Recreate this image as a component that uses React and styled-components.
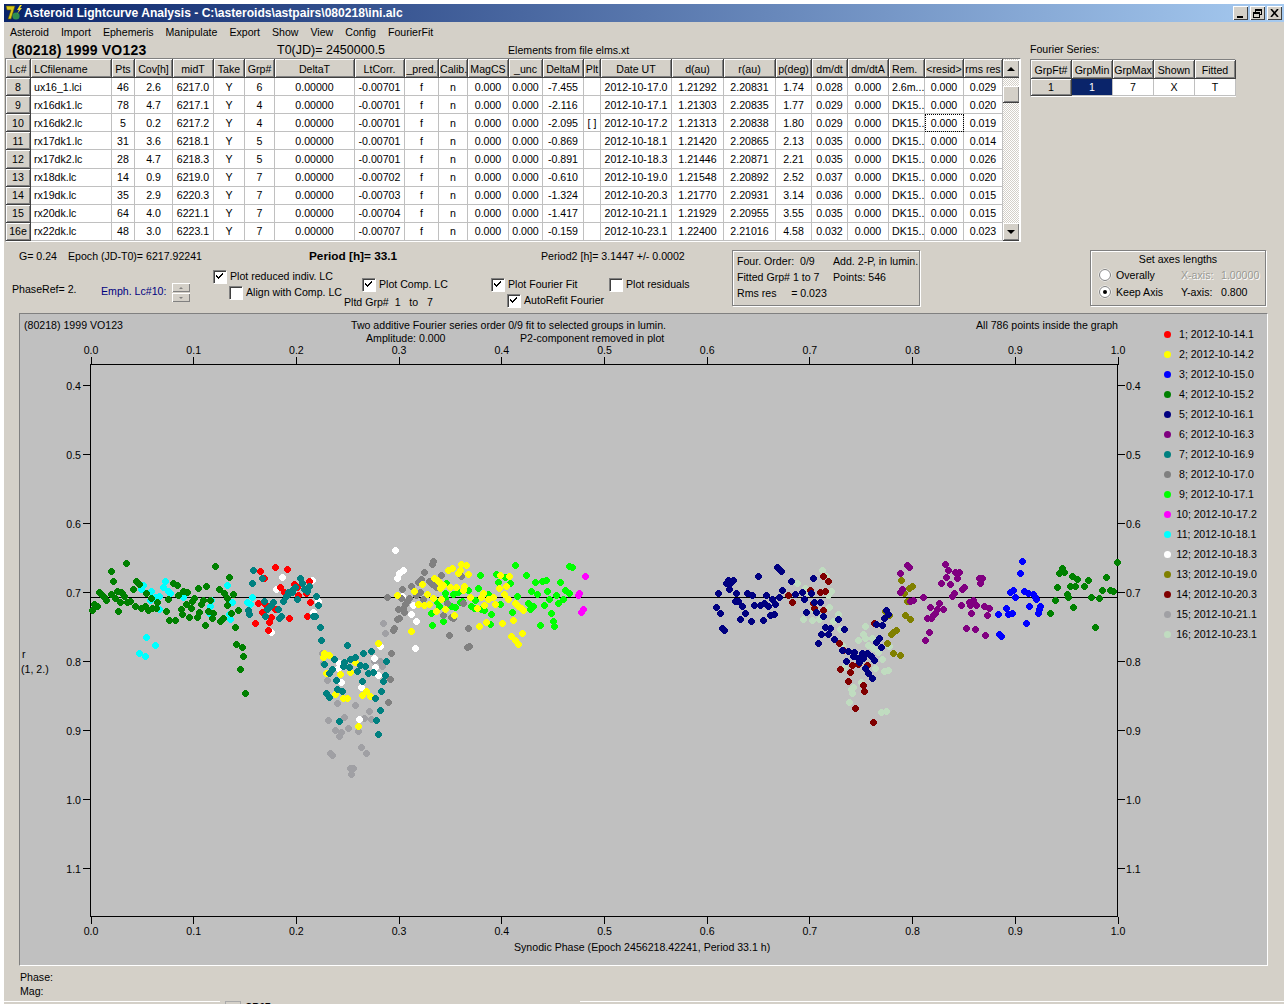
import React from 'react';
import styled, { createGlobalStyle } from 'styled-components';

const FACE = '#d4d0c8';
const SHADOW = '#808080';

const GlobalStyle = createGlobalStyle`
  html, body {
    margin: 0;
    padding: 0;
    background: #fff;
    overflow: hidden;
  }
  body {
    font-family: "Liberation Sans", Arial, sans-serif;
    font-size: 10.6px;
    color: #000;
  }
`;

const COLUMNS = [25, 81, 23, 38, 41, 31, 30, 80, 50, 34, 29, 41, 34, 41, 17, 71, 52, 52, 36, 36, 41, 36, 39, 39];
const HEADERS = ['Lc#', 'LCfilename', 'Pts', 'Cov[h]', 'midT', 'Take', 'Grp#', 'DeltaT', 'LtCorr.', '_pred.', 'Calib.', 'MagCS', '_unc', 'DeltaM', 'Plt', 'Date UT', 'd(au)', 'r(au)', 'p(deg)', 'dm/dt', 'dm/dtA', 'Rem.', '<resid>', 'rms res'];
const ROWS = [
  ['8', 'ux16_1.lci', '46', '2.6', '6217.0', 'Y', '6', '0.00000', '-0.00701', 'f', 'n', '0.000', '0.000', '-7.455', '', '2012-10-17.0', '1.21292', '2.20831', '1.74', '0.028', '0.000', '2.6m...', '0.000', '0.029'],
  ['9', 'rx16dk1.lc', '78', '4.7', '6217.1', 'Y', '4', '0.00000', '-0.00701', 'f', 'n', '0.000', '0.000', '-2.116', '', '2012-10-17.1', '1.21303', '2.20835', '1.77', '0.029', '0.000', 'DK15..', '0.000', '0.020'],
  ['10', 'rx16dk2.lc', '5', '0.2', '6217.2', 'Y', '4', '0.00000', '-0.00701', 'f', 'n', '0.000', '0.000', '-2.095', '[ ]', '2012-10-17.2', '1.21313', '2.20838', '1.80', '0.029', '0.000', 'DK15..', '0.000', '0.019'],
  ['11', 'rx17dk1.lc', '31', '3.6', '6218.1', 'Y', '5', '0.00000', '-0.00701', 'f', 'n', '0.000', '0.000', '-0.869', '', '2012-10-18.1', '1.21420', '2.20865', '2.13', '0.035', '0.000', 'DK15..', '0.000', '0.014'],
  ['12', 'rx17dk2.lc', '28', '4.7', '6218.3', 'Y', '5', '0.00000', '-0.00701', 'f', 'n', '0.000', '0.000', '-0.891', '', '2012-10-18.3', '1.21446', '2.20871', '2.21', '0.035', '0.000', 'DK15..', '0.000', '0.026'],
  ['13', 'rx18dk.lc', '14', '0.9', '6219.0', 'Y', '7', '0.00000', '-0.00702', 'f', 'n', '0.000', '0.000', '-0.610', '', '2012-10-19.0', '1.21548', '2.20892', '2.52', '0.037', '0.000', 'DK15..', '0.000', '0.020'],
  ['14', 'rx19dk.lc', '35', '2.9', '6220.3', 'Y', '7', '0.00000', '-0.00703', 'f', 'n', '0.000', '0.000', '-1.324', '', '2012-10-20.3', '1.21770', '2.20931', '3.14', '0.036', '0.000', 'DK15..', '0.000', '0.015'],
  ['15', 'rx20dk.lc', '64', '4.0', '6221.1', 'Y', '7', '0.00000', '-0.00704', 'f', 'n', '0.000', '0.000', '-1.417', '', '2012-10-21.1', '1.21929', '2.20955', '3.55', '0.035', '0.000', 'DK15..', '0.000', '0.015'],
  ['16e', 'rx22dk.lc', '48', '3.0', '6223.1', 'Y', '7', '0.00000', '-0.00707', 'f', 'n', '0.000', '0.000', '-0.159', '', '2012-10-23.1', '1.22400', '2.21016', '4.58', '0.032', '0.000', 'DK15..', '0.000', '0.023'],
];
const LEFT_COLS = [1, 21];
const MENU = ['Asteroid', 'Import', 'Ephemeris', 'Manipulate', 'Export', 'Show', 'View', 'Config', 'FourierFit'];
const FOURIER_HEAD = ['GrpFt#', 'GrpMin', 'GrpMax', 'Shown', 'Fitted'];

const LEGEND = [
  ['1; 2012-10-14.1', '#ff0000'], ['2; 2012-10-14.2', '#ffff00'], ['3; 2012-10-15.0', '#0000ff'], ['4; 2012-10-15.2', '#008000'],
  ['5; 2012-10-16.1', '#000080'], ['6; 2012-10-16.3', '#800080'], ['7; 2012-10-16.9', '#008080'], ['8; 2012-10-17.0', '#808080'],
  ['9; 2012-10-17.1', '#00ff00'], ['10; 2012-10-17.2', '#ff00ff'], ['11; 2012-10-18.1', '#00ffff'], ['12; 2012-10-18.3', '#ffffff'],
  ['13; 2012-10-19.0', '#808000'], ['14; 2012-10-20.3', '#800000'], ['15; 2012-10-21.1', '#a0a0a4'], ['16; 2012-10-23.1', '#c0dcc0'],
];

// dots were read off 3x crops, so each list keeps the crop's origin: [colour, originX, [x, y, x, y, ...]]
const LEFT = 80;
const MID = 380;
const RIGHT = 700;
const SERIES = [
  ['#c0dcc0', RIGHT, [367,91,379,109,292,130,316,145,322,157,394,154,385,166,388,202,415,223,310,238,337,241,358,238,400,244,421,268,496,259,490,283,496,295,475,301,517,295,505,316,568,319,427,316,535,337,547,358,526,385,553,394,565,391,433,382,484,427,460,442,454,448,457,460,448,487,544,517,559,514,340,208,520,325]],
  ['#a0a0a4', LEFT, [742,421,772,490,826,496,793,532,745,541,868,514,853,535,874,538,766,571,784,577,778,589,805,565,835,574,844,622,859,640,751,640,757,646,811,685,820,685,814,703,883,364,907,379,901,364,727,340,730,370,910,250,916,280,967,148]],
  ['#800000', RIGHT, [385,122,370,108,277,187,265,164,361,157,376,154,343,205,370,211,418,310,490,435,457,376,475,373,502,376,451,397,421,388,445,424,493,454,466,505,520,547,523,250,330,150,338,190,430,330]],
  ['#808000', RIGHT, [604,121,637,139,628,145,613,160,622,184,616,226,631,238,589,271,580,277,574,283,562,310,580,340,601,346,556,214,568,226]],
  ['#ffffff', LEFT, [607,112,697,121,589,148,700,217,715,184,777,370,775,385,574,277,883,355,901,319,886,380,895,406,784,427,844,442,837,538,946,31,970,91,958,100,952,115,965,167]],
  ['#ffffff', MID, [100,196,94,223,109,244,106,325]],
  ['#00ffff', LEFT, [190,136,184,148,214,154,256,124,250,142,265,154,271,160,238,169,226,172,211,181,310,172,394,181,391,199,388,220,238,208,442,136,457,187,451,238,448,223,517,172,502,187,511,193,199,292,226,316,178,340,196,349]],
  ['#ff00ff', MID, [616,109,598,160,595,166,610,208,604,217]],
  ['#00ff00', MID, [406,76,301,106,349,103,439,106,376,112,355,127,391,130,466,127,487,124,499,121,541,127,295,145,454,154,472,163,502,154,529,166,556,151,568,160,550,178,508,178,535,190,493,196,445,190,460,199,451,208,397,217,514,220,520,244,523,259,481,256,568,79,577,82,199,130,220,163,235,157,265,150,196,160,172,187,178,199,214,199,226,202,154,220,190,244,157,256,247,184,241,187,274,199,283,205,304,208,313,211,334,223,330,253,361,193,325,163,412,169,286,181,196,175]],
  ['#808080', MID, [160,64,157,73,133,97,184,106,124,118,115,127,94,139,148,124,157,133,169,142,121,157,88,175,82,184,64,175,76,193,70,205,55,208,73,217,58,235,50,238,43,265,40,271,200,190,190,226,214,232,220,235,265,265,208,286,262,322,268,319,34,340,22,172,244,109,109,166,130,178,250,190,67,148]],
  ['#808080', LEFT, [934,340,931,418,925,487]],
  ['#ff0000', LEFT, [541,94,586,82,622,88,553,115,601,142,643,133,688,124,652,142,679,160,613,157,533,190,556,193,584,208,545,217,574,232,568,247,526,250,565,271,628,235,682,229,691,187,655,165]],
  ['#ffff00', LEFT, [733,340,748,346,730,352,893,310,826,367,739,400,781,403,811,397,766,463,790,475,802,475,859,454,847,466,871,469,835,559]],
  ['#ffff00', MID, [244,73,259,76,217,85,205,91,241,91,235,100,265,103,163,115,172,121,178,127,190,136,181,145,127,133,103,154,142,163,52,166,160,175,184,178,115,193,133,196,148,193,169,214,196,208,223,226,211,142,229,142,253,139,250,151,271,172,310,160,304,172,325,178,340,172,292,205,313,196,346,193,361,106,388,109,379,139,358,145,373,163,385,178,406,190,415,199,424,205,430,211,400,241,367,250,319,247,298,259,427,280,394,289,406,301,415,313,94,274]],
  ['#0000ff', RIGHT, [967,64,960,100,940,151,931,157,946,172,973,154,985,160,1000,163,1006,172,1009,178,988,199,1021,199,1018,208,1015,220,919,205,937,220,925,223,895,223,979,250,898,283,904,289]],
  ['#008000', LEFT, [139,70,94,92,100,124,169,124,176,133,160,148,112,152,122,155,58,157,65,164,72,170,92,163,105,175,127,160,133,168,79,181,121,186,142,186,150,182,115,214,164,199,183,205,194,198,205,211,215,204,228,204,232,187,199,160,212,173,263,178,259,214,267,241,286,241,279,129,290,136,295,165,310,154,322,155,355,145,379,139,406,79,448,112,418,148,432,160,460,163,442,175,440,196,342,175,336,183,317,193,332,205,302,208,307,222,328,232,350,232,358,217,364,193,370,181,391,181,384,214,400,220,397,235,421,244,428,235,376,256,454,220,475,211,466,262,469,313,487,322,490,349,481,388,496,460,37,211,43,193,52,199]],
  ['#008000', RIGHT, [1252,67,1085,85,1078,100,1092,97,1115,109,1132,118,1165,121,1219,112,1072,142,1111,139,1126,139,1153,139,1100,163,1105,170,1064,181,1120,202,1051,220,1174,172,1198,175,1207,151,1229,151,1240,154,1186,262]],
  ['#000080', RIGHT, [232,82,238,88,244,94,175,109,274,124,340,115,100,121,85,121,79,130,91,130,88,148,55,160,109,160,142,160,157,166,199,166,247,151,238,172,217,178,226,193,106,184,115,184,127,199,163,196,181,196,193,190,205,199,49,202,61,220,136,220,121,238,154,244,190,241,211,226,223,223,67,265,73,271,286,163,307,157,334,160,313,178,343,187,361,187,319,217,349,217,370,229,415,238,376,262,391,265,433,268,364,283,385,283,403,298,355,310,427,331,445,334,463,337,439,364,460,349,475,355,490,355,502,340,514,349,523,361,478,365,485,340,496,385,505,400,517,415,538,295,529,307,544,322,529,253,547,256,553,235,559,211,565,223]],
  ['#800080', RIGHT, [622,76,628,82,601,100,607,148,601,157,640,181,631,184,670,172,691,202,736,73,745,91,766,97,778,97,739,112,772,115,724,130,751,133,793,142,787,148,763,160,757,169,838,115,847,115,841,130,784,196,808,187,820,181,829,196,811,196,853,199,868,205,862,226,814,220,718,190,730,208,712,208,706,220,700,226,694,235,682,235,688,277,676,301,799,265,826,268,856,286]],
  ['#008080', LEFT, [520,91,547,115,517,130,661,115,667,130,640,148,625,157,619,169,688,139,682,154,652,178,580,187,574,196,562,208,556,229,595,208,604,229,598,235,505,211,508,223,551,184,709,169,715,196,700,229,706,229,721,262,724,301,802,316,874,334,850,340,826,352,811,358,793,367,790,379,763,358,733,373,757,388,748,400,769,421,808,382,832,394,841,376,856,379,865,400,880,397,919,364,916,406,910,424,847,424,904,454,886,475,901,511,889,541,895,583,778,544,748,472,739,460,772,448,787,454,628,160,637,157,646,142,673,148,610,184,565,205]],
];

const PLOT = { left: 90.5, right: 1117.5, top: 364.5, bottom: 916.5 };
const PHASES = ['0.0', '0.1', '0.2', '0.3', '0.4', '0.5', '0.6', '0.7', '0.8', '0.9', '1.0'];
const MAGS = ['0.4', '0.5', '0.6', '0.7', '0.8', '0.9', '1.0', '1.1'];

const Page = styled.div`
  box-sizing: border-box;
  width: 1288px;
  height: 1004px;
  padding: 4px 4px 0;
  overflow: hidden;
`;

const Window = styled.div`
  display: flex;
  flex-direction: column;
  height: 1000px;
  background: ${FACE};
`;

const TitleBar = styled.div`
  display: flex;
  align-items: center;
  flex: none;
  height: 18px;
  padding: 0 2px 0 1px;
  background: linear-gradient(90deg, #0a246a, #a6caf0);
  color: #fff;
  font-size: 12.1px;
  font-weight: bold;
`;

const TitleText = styled.span`
  flex: 1;
  margin-left: 1px;
`;

const CaptionButton = styled.button`
  display: flex;
  align-items: center;
  justify-content: center;
  width: 15px;
  height: 14px;
  margin-left: ${(p) => p.$gap}px;
  padding: 0;
  border: 0;
  background: ${FACE};
  box-shadow: inset 1px 1px #fff, inset -1px -1px #404040;
`;

const MenuBar = styled.div`
  display: flex;
  flex: none;
  align-items: center;
  gap: 12px;
  height: 19px;
  padding-left: 6px;
`;

const HeadingRow = styled.div`
  display: flex;
  flex: none;
  align-items: center;
  box-sizing: border-box;
  height: 17px;
  padding-top: 1px;
`;

const HeadingText = styled.span`
  flex: none;
  width: ${(p) => p.$width}px;
  padding-left: ${(p) => p.$pad || 0}px;
  box-sizing: border-box;
  font-size: ${(p) => p.$size || 10.6}px;
  font-weight: ${(p) => (p.$bold ? 'bold' : 'normal')};
  letter-spacing: ${(p) => (p.$bold ? '0.2px' : '0')};
`;

const TableRow = styled.div`
  display: flex;
  flex: none;
  height: 183px;
  padding-left: 1px;
`;

const GridFrame = styled.div`
  display: flex;
  flex: none;
  width: 1014px;
  height: 182px;
  border-top: 1px solid ${SHADOW};
  border-left: 1px solid ${SHADOW};
  border-right: 1px solid #fff;
  border-bottom: 1px solid #fff;
  background: #fff;
`;

const Grid = styled.table`
  flex: none;
  width: ${(p) => p.$width}px;
  table-layout: fixed;
  border-collapse: separate;
  border-spacing: 0;
  font-size: 10.6px;
`;

const HeadCell = styled.th`
  box-sizing: border-box;
  height: ${(p) => p.$height}px;
  padding: ${(p) => (p.$head ? '1px' : '0')} 1px 0;
  overflow: hidden;
  background: ${FACE};
  border-right: 1px solid #404040;
  border-bottom: 1px solid #404040;
  box-shadow: inset 1px 1px #fff, inset -1px -1px ${SHADOW};
  font-weight: normal;
  white-space: nowrap;
  text-align: ${(p) => (p.$left ? 'left' : 'center')};
  padding-left: ${(p) => (p.$left ? '3px' : '1px')};
`;

const DataCell = styled.td`
  box-sizing: border-box;
  height: ${(p) => p.$height}px;
  padding: 0 1px;
  overflow: hidden;
  border-right: 1px solid #c0c0c0;
  border-bottom: 1px solid #c0c0c0;
  white-space: nowrap;
  text-align: ${(p) => (p.$left ? 'left' : 'center')};
  padding-left: ${(p) => (p.$left ? '3px' : '1px')};
  outline: ${(p) => (p.$focus ? '1px dotted #000' : 'none')};
  outline-offset: -1px;
  background: ${(p) => (p.$selected ? '#0a246a' : '#fff')};
  color: ${(p) => (p.$selected ? '#fff' : '#000')};
`;

const ScrollBar = styled.div`
  display: flex;
  flex: none;
  flex-direction: column;
  box-sizing: border-box;
  width: 16px;
  height: 181px;
  padding-top: 1px;
  background: repeating-conic-gradient(#fff 0 25%, ${FACE} 0 50%) 0 0 / 2px 2px;
`;

const ScrollButton = styled.div`
  display: flex;
  flex: none;
  align-items: center;
  justify-content: center;
  height: ${(p) => p.$height}px;
  margin-top: ${(p) => p.$top || 0}px;
  background: ${FACE};
  box-shadow: inset 1px 1px #fff, inset -1px -1px ${SHADOW}, 0 1px #404040;
`;

const ArrowGlyph = styled.i`
  width: 0;
  height: 0;
  border-left: 4px solid transparent;
  border-right: 4px solid transparent;
  border-${(p) => (p.$down ? 'top' : 'bottom')}: 4px solid #000;
`;

const FourierPanel = styled.div`
  display: flex;
  flex: none;
  flex-direction: column;
  margin: -17px 0 0 9px;
`;

const FourierLabel = styled.div`
  height: 18px;
  line-height: 16px;
`;

const FourierFrame = styled.div`
  box-sizing: border-box;
  width: 206px;
  height: 38px;
  border-top: 1px solid ${SHADOW};
  border-left: 1px solid ${SHADOW};
  border-right: 1px solid #fff;
  border-bottom: 1px solid #fff;
  background: ${FACE};
`;

const ControlsRow = styled.div`
  display: flex;
  flex: none;
  height: 72px;
`;

const LeftControls = styled.div`
  display: flex;
  flex: none;
  flex-direction: column;
  width: 728px;
`;

const InfoLine = styled.div`
  display: flex;
  flex: none;
  align-items: center;
  height: 24px;
  padding: 7px 0 0 15px;
  box-sizing: border-box;
  line-height: 13px;
`;

const InfoText = styled.span`
  flex: none;
  width: ${(p) => p.$width}px;
  font-size: ${(p) => (p.$bold ? '11.8px' : 'inherit')};
  font-weight: ${(p) => (p.$bold ? 'bold' : 'normal')};
`;

const OptionsRow = styled.div`
  display: flex;
  flex: 1;
  padding-left: 8px;
`;

const OptionColumn = styled.div`
  display: flex;
  flex: none;
  flex-direction: column;
  width: ${(p) => p.$width}px;
  padding-top: ${(p) => p.$top}px;
  box-sizing: border-box;
  color: ${(p) => p.$color || '#000'};
  line-height: 13px;
`;

const SpinBox = styled.div`
  display: flex;
  flex-direction: column;
  gap: 1px;
  width: 18px;
`;

const SpinButton = styled.div`
  display: flex;
  align-items: center;
  justify-content: center;
  height: 9px;
  background: ${FACE};
  box-shadow: inset 1px 1px #fff, inset -1px -1px ${SHADOW};
`;

const SmallArrow = styled.i`
  width: 0;
  height: 0;
  border-left: 2px solid transparent;
  border-right: 2px solid transparent;
  border-${(p) => (p.$down ? 'top' : 'bottom')}: 2px solid ${SHADOW};
`;

const CheckRow = styled.label`
  display: flex;
  align-items: center;
  height: 16px;
  margin-left: ${(p) => p.$indent || 0}px;
  white-space: nowrap;
`;

const CheckBox = styled.span`
  display: flex;
  flex: none;
  box-sizing: border-box;
  width: 13px;
  height: 13px;
  margin-right: 4px;
  background: #fff;
  border-top: 1px solid ${SHADOW};
  border-left: 1px solid ${SHADOW};
  box-shadow: inset 1px 1px #404040, 1px 1px 0 #fff;
`;

const PlainRow = styled.div`
  height: 16px;
  margin-top: 2px;
  line-height: 16px;
  white-space: pre;
`;

const GroupBox = styled.div`
  flex: none;
  box-sizing: border-box;
  width: ${(p) => p.$width}px;
  height: 56px;
  margin: 9px 0 0 ${(p) => p.$left}px;
  border: 1px solid ${SHADOW};
  box-shadow: 1px 1px 0 #fff, inset 1px 1px 0 #fff;
`;

const FourBody = styled.div`
  display: grid;
  grid-template-columns: 96px auto;
  grid-auto-rows: 16px;
  align-items: center;
  padding: 2px 0 0 4px;
  white-space: pre;
`;

const AxesTitle = styled.div`
  height: 13px;
  padding-top: 1px;
  line-height: 14px;
  text-align: center;
`;

const AxesGrid = styled.div`
  display: grid;
  grid-template-columns: 17px 65px 40px auto;
  grid-auto-rows: 17px;
  align-items: center;
  padding: 1px 0 0 8px;
`;

const Radio = styled.span`
  display: flex;
  align-items: center;
  justify-content: center;
  box-sizing: border-box;
  width: 12px;
  height: 12px;
  border-radius: 50%;
  background: #fff;
  border: 1px solid ${SHADOW};
  box-shadow: 0 0 0 0.5px #fff;
`;

const RadioDot = styled.i`
  width: 4px;
  height: 4px;
  border-radius: 50%;
  background: #000;
`;

const AxisValue = styled.span`
  color: ${(p) => (p.$off ? '#9a9a94' : '#000')};
  text-shadow: ${(p) => (p.$off ? '1px 1px 0 #fff' : 'none')};
`;

const PlotPanel = styled.div`
  display: flex;
  flex: none;
  box-sizing: border-box;
  width: 1249px;
  height: 653px;
  margin-left: 15px;
  background: #c0c0c0;
  border-top: 1px solid ${SHADOW};
  border-left: 1px solid ${SHADOW};
  border-right: 1px solid #fff;
  border-bottom: 1px solid #fff;
`;

const Chart = styled.svg`
  display: block;
  flex: none;
`;

const ChartText = styled.text`
  font-family: "Liberation Sans", Arial, sans-serif;
  font-size: 10.6px;
  fill: #000;
`;

const Legend = styled.ul`
  display: flex;
  flex: 1;
  flex-direction: column;
  margin: 0;
  padding: 10px 0 0 4px;
  list-style: none;
`;

const LegendItem = styled.li`
  display: flex;
  align-items: center;
  height: 20px;
`;

const LegendDot = styled.i`
  flex: none;
  width: 7px;
  height: 7px;
  border-radius: 50%;
  background: ${(p) => p.$color};
`;

const LegendLabel = styled.span`
  flex: 1;
  text-align: center;
  margin-left: 4px;
  margin-right: 9px;
`;

const StatusArea = styled.div`
  flex: none;
  height: 35px;
  padding: 4px 0 0 16px;
  box-sizing: border-box;
  line-height: 14px;
`;

const BottomEdge = styled.div`
  display: flex;
  flex: 1;
  overflow: hidden;
`;

const EdgeLine = styled.div`
  flex: ${(p) => (p.$width ? 'none' : '1')};
  width: ${(p) => p.$width}px;
  border-top: 1px solid #fff;
`;

const PeekBox = styled.div`
  flex: none;
  width: 14px;
  height: 8px;
  margin: 0 4px 0 5px;
  border: 1px solid #aaa;
`;

const PeekText = styled.div`
  flex: none;
  width: 335px;
  line-height: 13px;
  font-weight: bold;
  font-size: 10px;
`;

const AppIcon = () => (
  <svg width="18" height="16" viewBox="0 0 18 16">
    <rect width="18" height="16" fill="#0a246a" />
    <path d="M1 1h9l-4 13H3l3-9H2z" fill="#d8c818" stroke="#5a5000" strokeWidth="0.6" />
    <circle cx="11" cy="11" r="3.6" fill="#2f8f4f" />
    <path d="M15 0l-3 5h2l-2 4 5-6h-2l2-3z" fill="#f4e020" />
  </svg>
);

const MinGlyph = () => (
  <svg width="9" height="9" viewBox="0 0 9 9"><rect x="1" y="7" width="6" height="2" /></svg>
);

const RestoreGlyph = () => (
  <svg width="9" height="9" viewBox="0 0 9 9" fill="none" stroke="#000" shapeRendering="crispEdges">
    <path d="M2.5 2.5V.5h6v5h-2" />
    <path d="M2.5 1.5h6" />
    <rect x="0.5" y="3.5" width="6" height="5" fill={FACE} />
    <path d="M0.5 4.5h6" />
  </svg>
);

const CloseGlyph = () => (
  <svg width="9" height="8" viewBox="0 0 9 8" stroke="#000" strokeWidth="1.6">
    <path d="M1 0l7 8M8 0L1 8" />
  </svg>
);

const CheckMark = () => (
  <svg width="11" height="11" viewBox="0 0 11 11" fill="none" stroke="#000" strokeWidth="2" shapeRendering="crispEdges">
    <path d="M2 4.5l2.5 2.5L9 2.5" />
  </svg>
);

const Option = ({ checked, indent, children }) => (
  <CheckRow $indent={indent}>
    <CheckBox>{checked && <CheckMark />}</CheckBox>
    {children}
  </CheckRow>
);

const gridWidth = COLUMNS.reduce((sum, w) => sum + w, 0);

// the old GDI plot draws 7px blobs with stepped corners, not smooth circles
const blobPath = (flat, origin) => {
  let d = '';
  for (let i = 0; i < flat.length; i += 2) {
    const x = Math.round(origin + flat[i] / 3) - 1;
    const y = Math.round(540 + flat[i + 1] / 3) - 3;
    d += `M${x} ${y}h3v1h1v1h1v3h-1v1h-1v1h-3v-1h-1v-1h-1v-3h1v-1h1z`;
  }
  return d;
};

function LightcurveGrid() {
  return (
    <Grid $width={gridWidth}>
      <colgroup>
        {COLUMNS.map((w, i) => <col key={i} width={w} />)}
      </colgroup>
      <thead>
        <tr>
          {HEADERS.map((h, i) => <HeadCell key={h} $head $height={19} $left={LEFT_COLS.includes(i)}>{h}</HeadCell>)}
        </tr>
      </thead>
      <tbody>
        {ROWS.map((row, r) => (
          <tr key={row[0]}>
            {row.map((v, i) => (i === 0
              ? <HeadCell key={i} as="td" $height={18}>{v}</HeadCell>
              : <DataCell key={i} $height={18} $left={LEFT_COLS.includes(i)} $focus={r === 2 && i === 22}>{v}</DataCell>
            ))}
          </tr>
        ))}
      </tbody>
    </Grid>
  );
}

function FourierGrid() {
  return (
    <Grid $width={204}>
      <colgroup>
        {FOURIER_HEAD.map((h) => <col key={h} width={41} />)}
      </colgroup>
      <thead>
        <tr>{FOURIER_HEAD.map((h) => <HeadCell key={h} $head $height={19}>{h}</HeadCell>)}</tr>
      </thead>
      <tbody>
        <tr>
          <HeadCell as="td" $height={17}>1</HeadCell>
          <DataCell $height={17} $selected>1</DataCell>
          <DataCell $height={17}>7</DataCell>
          <DataCell $height={17}>X</DataCell>
          <DataCell $height={17}>T</DataCell>
        </tr>
      </tbody>
    </Grid>
  );
}

function PlotChart() {
  const width = 1140;
  const unit = (PLOT.right - PLOT.left) / 10;
  const magY = (i) => 385.5 + i * 69;
  return (
    <Chart width={width} height={651} viewBox={`20 314 ${width} 651`}>
      <ChartText x="24" y="329">(80218) 1999 VO123</ChartText>
      <ChartText x="351" y="329">Two additive Fourier series order 0/9 fit to selected groups in lumin.</ChartText>
      <ChartText x="366" y="342">Amplitude: 0.000</ChartText>
      <ChartText x="520" y="342">P2-component removed in plot</ChartText>
      <ChartText x="976" y="329">All 786 points inside the graph</ChartText>

      <g stroke="#000" shapeRendering="crispEdges" fill="none">
        <rect x={PLOT.left} y={PLOT.top} width={PLOT.right - PLOT.left} height={PLOT.bottom - PLOT.top} />
        <path d={`M${PLOT.left} 597.5H${PLOT.right}`} />
        {PHASES.map((_, i) => {
          const x = Math.round(PLOT.left + unit * i) + 0.5;
          return <path key={i} d={`M${x} 357V${PLOT.top}M${x} ${PLOT.bottom}V924`} />;
        })}
        {MAGS.map((_, i) => (
          <path key={i} d={`M83 ${magY(i)}H${PLOT.left}M${PLOT.right} ${magY(i)}H1125`} />
        ))}
      </g>

      {SERIES.map(([color, origin, flat], s) => (
        <path key={s} d={blobPath(flat, origin)} fill={color} shapeRendering="crispEdges" />
      ))}

      {PHASES.map((label, i) => {
        const x = PLOT.left + unit * i + 0.5;
        return (
          <React.Fragment key={label}>
            <ChartText x={x} y="354" textAnchor="middle">{label}</ChartText>
            <ChartText x={x} y="935" textAnchor="middle">{label}</ChartText>
          </React.Fragment>
        );
      })}
      {MAGS.map((label, i) => (
        <React.Fragment key={label}>
          <ChartText x="81" y={magY(i) + 4} textAnchor="end">{label}</ChartText>
          <ChartText x="1126" y={magY(i) + 4}>{label}</ChartText>
        </React.Fragment>
      ))}
      <ChartText x="22" y="658">r</ChartText>
      <ChartText x="21" y="673">(1, 2.)</ChartText>
      <ChartText x="514" y="951">Synodic Phase (Epoch 2456218.42241, Period 33.1 h)</ChartText>
    </Chart>
  );
}

export default function App() {
  return (
    <Page>
      <GlobalStyle />
      <Window>
        <TitleBar>
          <AppIcon />
          <TitleText>Asteroid Lightcurve Analysis - C:\asteroids\astpairs\080218\ini.alc</TitleText>
          <CaptionButton><MinGlyph /></CaptionButton>
          <CaptionButton $gap={2}><RestoreGlyph /></CaptionButton>
          <CaptionButton $gap={2}><CloseGlyph /></CaptionButton>
        </TitleBar>
        <MenuBar>
          {MENU.map((m) => <span key={m}>{m}</span>)}
        </MenuBar>
        <HeadingRow>
          <HeadingText $width={273} $pad={8} $size={14} $bold>(80218) 1999 VO123</HeadingText>
          <HeadingText $width={231} $size={12.5}>T0(JD)= 2450000.5</HeadingText>
          <HeadingText $width={300}>Elements from file elms.xt</HeadingText>
        </HeadingRow>
        <TableRow>
          <GridFrame>
            <LightcurveGrid />
            <ScrollBar>
              <ScrollButton $height={17}><ArrowGlyph /></ScrollButton>
              <ScrollButton $height={16} $top={9} />
              <ScrollButton $height={17} $top={121}><ArrowGlyph $down /></ScrollButton>
            </ScrollBar>
          </GridFrame>
          <FourierPanel>
            <FourierLabel>Fourier Series:</FourierLabel>
            <FourierFrame>
              <FourierGrid />
            </FourierFrame>
          </FourierPanel>
        </TableRow>
        <ControlsRow>
          <LeftControls>
            <InfoLine>
              <InfoText $width={49}>G= 0.24</InfoText>
              <InfoText $width={241}>Epoch (JD-T0)= 6217.92241</InfoText>
              <InfoText $width={232} $bold>Period [h]= 33.1</InfoText>
              <InfoText $width={170}>Period2 [h]= 3.1447 +/- 0.0002</InfoText>
            </InfoLine>
            <OptionsRow>
              <OptionColumn $width={89} $top={18}>PhaseRef= 2.</OptionColumn>
              <OptionColumn $width={71} $top={20} $color="#000080">Emph. Lc#10:</OptionColumn>
              <OptionColumn $width={41} $top={18}>
                <SpinBox>
                  <SpinButton><SmallArrow /></SpinButton>
                  <SpinButton><SmallArrow $down /></SpinButton>
                </SpinBox>
              </OptionColumn>
              <OptionColumn $width={131} $top={3}>
                <Option checked>Plot reduced indiv. LC</Option>
                <Option indent={16}>Align with Comp. LC</Option>
              </OptionColumn>
              <OptionColumn $width={147} $top={11}>
                <Option checked indent={18}>Plot Comp. LC</Option>
                <PlainRow>{'Pltd Grp#  1   to   7'}</PlainRow>
              </OptionColumn>
              <OptionColumn $width={118} $top={11}>
                <Option checked>Plot Fourier Fit</Option>
                <Option checked indent={16}>AutoRefit Fourier</Option>
              </OptionColumn>
              <OptionColumn $width={110} $top={11}>
                <Option>Plot residuals</Option>
              </OptionColumn>
            </OptionsRow>
          </LeftControls>
          <GroupBox $width={188} $left={0}>
            <FourBody>
              <span>{'Four. Order:  0/9'}</span><span>Add. 2-P, in lumin.</span>
              <span>{'Fitted Grp# 1 to 7'}</span><span>Points: 546</span>
              <span>{'Rms res     = 0.023'}</span><span />
            </FourBody>
          </GroupBox>
          <GroupBox $width={176} $left={170}>
            <AxesTitle>Set axes lengths</AxesTitle>
            <AxesGrid>
              <Radio />
              <span>Overally</span>
              <AxisValue $off>X-axis:</AxisValue>
              <AxisValue $off>1.00000</AxisValue>
              <Radio><RadioDot /></Radio>
              <span>Keep Axis</span>
              <AxisValue>Y-axis:</AxisValue>
              <AxisValue>0.800</AxisValue>
            </AxesGrid>
          </GroupBox>
        </ControlsRow>
        <PlotPanel>
          <PlotChart />
          <Legend>
            {LEGEND.map(([label, color]) => (
              <LegendItem key={label}>
                <LegendDot $color={color} />
                <LegendLabel>{label}</LegendLabel>
              </LegendItem>
            ))}
          </Legend>
        </PlotPanel>
        <StatusArea>
          Phase:
          <br />
          Mag:
        </StatusArea>
        <BottomEdge>
          <EdgeLine $width={216} />
          <PeekBox />
          <PeekText>CR07</PeekText>
          <EdgeLine />
        </BottomEdge>
      </Window>
    </Page>
  );
}
